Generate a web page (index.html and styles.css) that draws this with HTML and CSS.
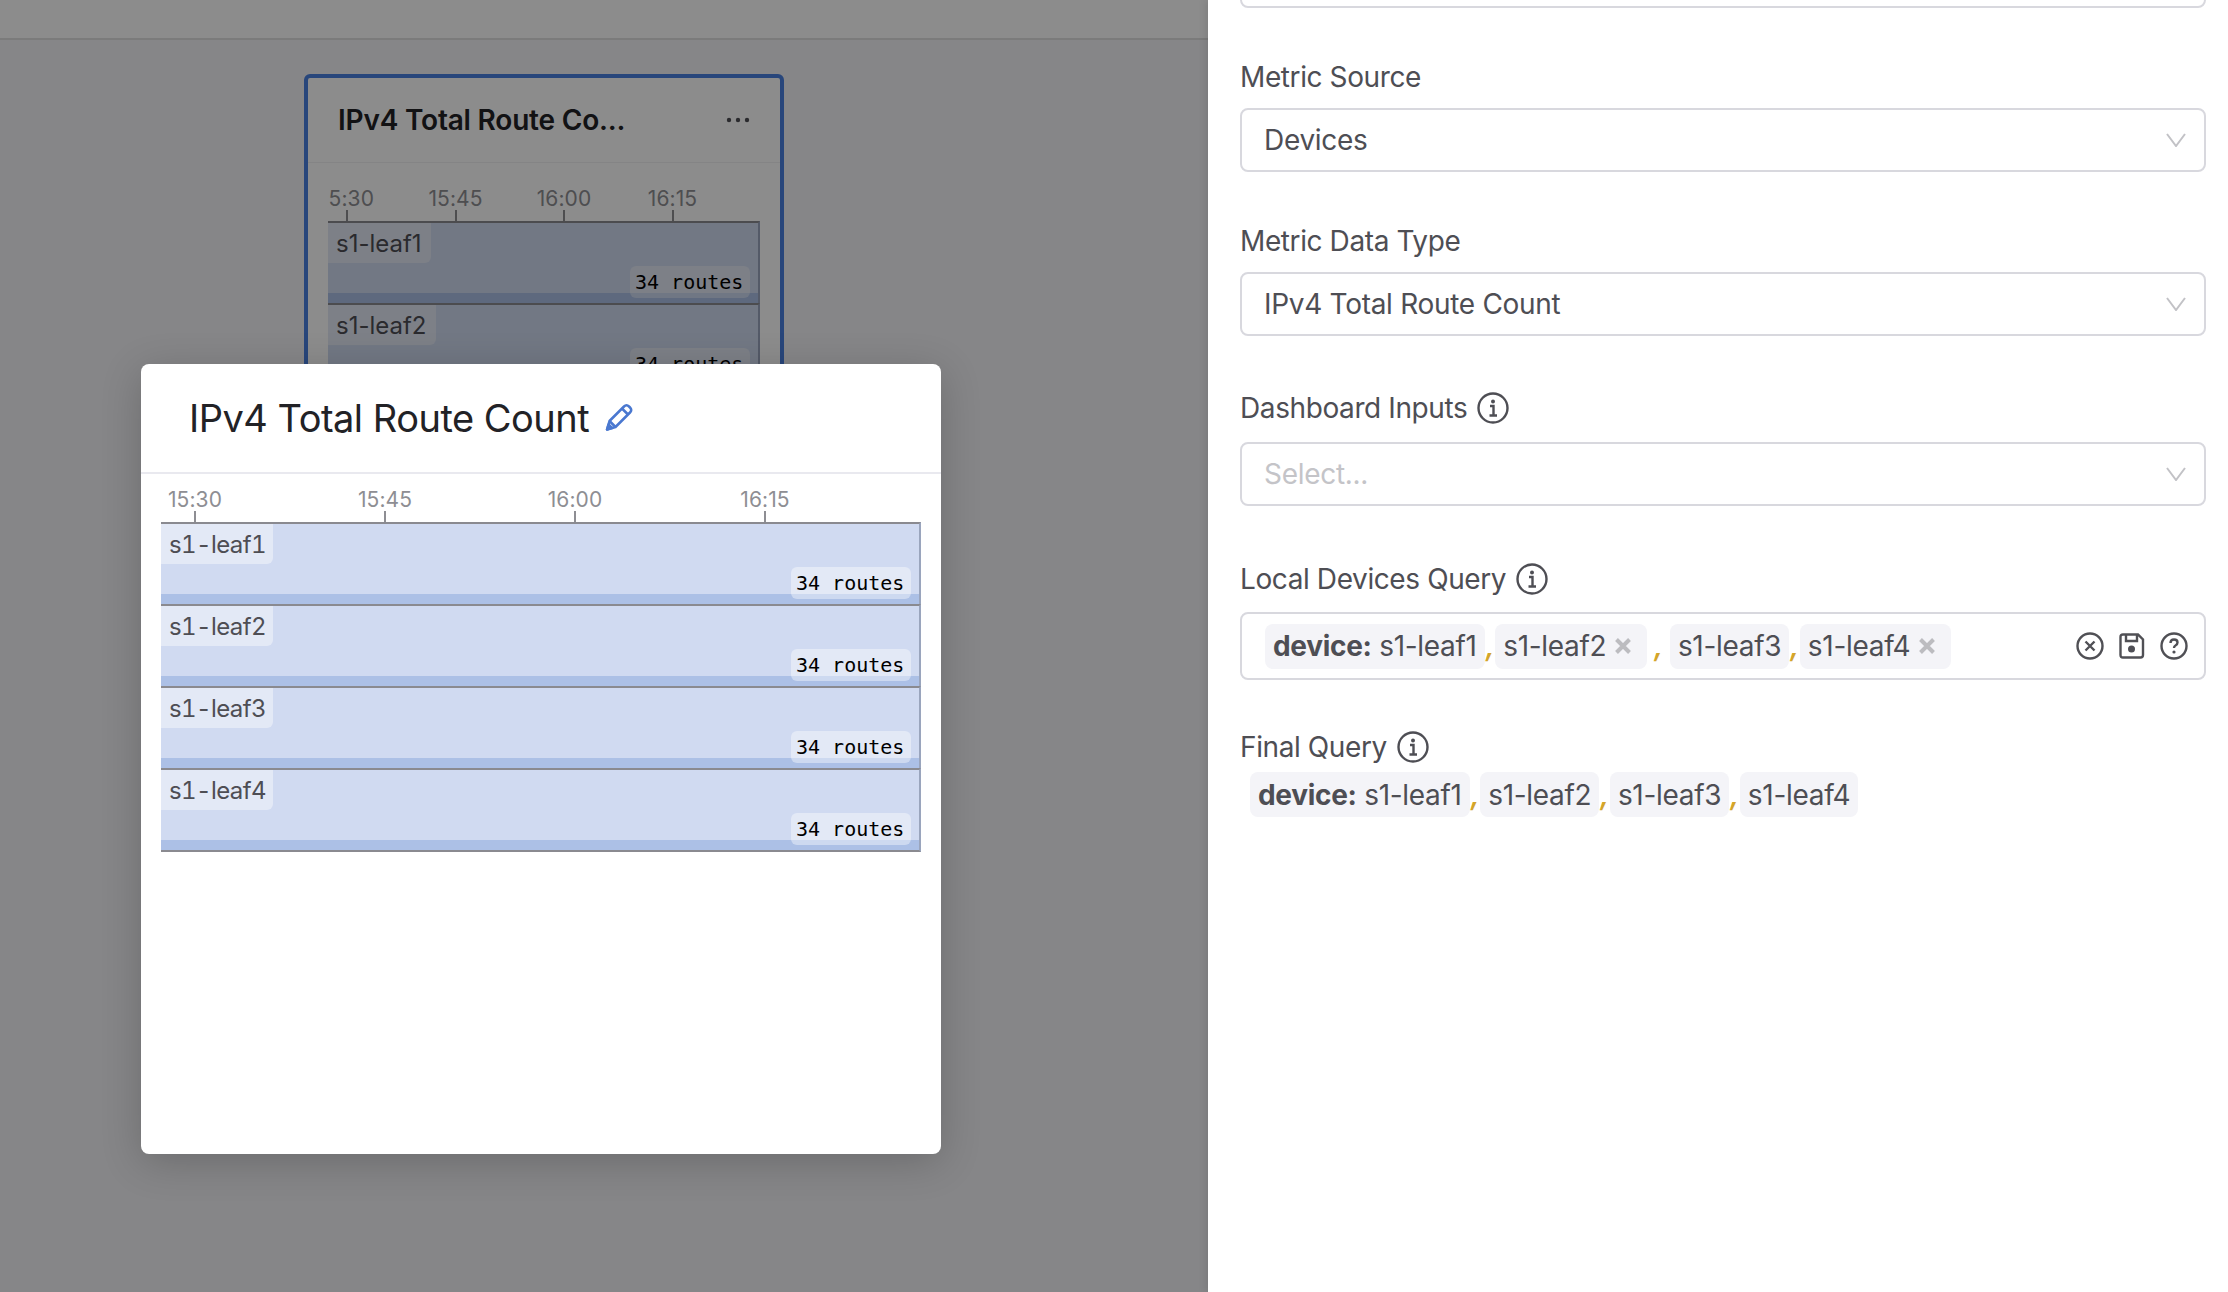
FILE: index.html
```html
<!DOCTYPE html>
<html>
<head>
	<meta charset="UTF-8">
	<title>IPv4 Total Route Count</title>
	<link rel="stylesheet" href="styles.css">
</head>
<body>
	<div class="page">
		<div class="canvas">
			<div class="topbar"></div>
			<div class="card">
				<div class="card-head">
					<span class="card-title">IPv4 Total Route Co...</span>
					<svg class="dots" viewBox="0 0 24 6" width="24" height="6"><circle cx="3" cy="3" r="2.2"/><circle cx="12" cy="3" r="2.2"/><circle cx="21" cy="3" r="2.2"/></svg>
				</div>
				<div class="timeline timeline-small">
					<div class="axis">
						<div class="tick">15:30</div>
						<div class="tick">15:45</div>
						<div class="tick">16:00</div>
						<div class="tick">16:15</div>
					</div>
					<div class="row"><span class="row-name">s1-leaf1</span><span class="row-value">34 routes</span></div>
					<div class="row"><span class="row-name">s1-leaf2</span><span class="row-value">34 routes</span></div>
					<div class="row"><span class="row-name">s1-leaf3</span><span class="row-value">34 routes</span></div>
				</div>
			</div>
			<div class="scrim"></div>
			<div class="modal">
				<div class="modal-head">
					<span class="modal-title">IPv4 Total Route Count</span>
					<svg class="pencil" viewBox="0 0 28 28" width="28" height="28">
						<path d="M2 26.500 L4.500 18 L19 3.500 Q21.500 1 24 3.500 L25 4.500 Q27.500 7 25 9.500 L10.500 24 Z"/>
						<path d="M17 5.500 L23 11.500 M4.500 18 L10.500 24"/>
						<path class="pencil-tip" d="M2 26.500 L3.500 21.500 L7 25 Z"/>
					</svg>
				</div>
				<div class="timeline timeline-large">
					<div class="axis">
						<div class="tick">15:30</div>
						<div class="tick">15:45</div>
						<div class="tick">16:00</div>
						<div class="tick">16:15</div>
					</div>
					<div class="row"><span class="row-name">s1-leaf1</span><span class="row-value">34 routes</span></div>
					<div class="row"><span class="row-name">s1-leaf2</span><span class="row-value">34 routes</span></div>
					<div class="row"><span class="row-name">s1-leaf3</span><span class="row-value">34 routes</span></div>
					<div class="row row-last"><span class="row-name">s1-leaf4</span><span class="row-value">34 routes</span></div>
				</div>
			</div>
		</div>

		<div class="drawer">
			<div class="select select-cut"></div>

			<div class="field">
				<div class="field-label">Metric Source</div>
				<div class="select">
					<span>Devices</span>
					<svg class="chevron" viewBox="0 0 20 14" width="20" height="14"><path d="M1 1 L10 13 L19 1"/></svg>
				</div>
			</div>

			<div class="field">
				<div class="field-label">Metric Data Type</div>
				<div class="select">
					<span>IPv4 Total Route Count</span>
					<svg class="chevron" viewBox="0 0 20 14" width="20" height="14"><path d="M1 1 L10 13 L19 1"/></svg>
				</div>
			</div>

			<div class="field field-inputs">
				<div class="field-label label-info">Dashboard Inputs
					<svg class="info" viewBox="0 0 32 32" width="32" height="32"><circle cx="16" cy="16" r="14.500"/><circle class="fill" cx="16" cy="9.500" r="2"/><path d="M13 14 H16.500 V23 M12.500 23.500 H20"/></svg>
				</div>
				<div class="select">
					<span class="placeholder">Select...</span>
					<svg class="chevron" viewBox="0 0 20 14" width="20" height="14"><path d="M1 1 L10 13 L19 1"/></svg>
				</div>
			</div>

			<div class="field field-query">
				<div class="field-label label-info">Local Devices Query
					<svg class="info" viewBox="0 0 32 32" width="32" height="32"><circle cx="16" cy="16" r="14.500"/><circle class="fill" cx="16" cy="9.500" r="2"/><path d="M13 14 H16.500 V23 M12.500 23.500 H20"/></svg>
				</div>
				<div class="query-input">
					<div class="chips">
						<span class="chip"><b>device:</b> s1-leaf1</span>
						<span class="comma">,</span>
						<span class="chip">s1-leaf2<svg class="chip-x" viewBox="0 0 16 16" width="16" height="16"><path d="M1.500 1.500 L14.500 14.500 M14.500 1.500 L1.500 14.500"/></svg></span>
						<span class="comma comma-wide">,</span>
						<span class="chip">s1-leaf3</span>
						<span class="comma">,</span>
						<span class="chip">s1-leaf4<svg class="chip-x" viewBox="0 0 16 16" width="16" height="16"><path d="M1.500 1.500 L14.500 14.500 M14.500 1.500 L1.500 14.500"/></svg></span>
					</div>
					<div class="query-tools">
						<svg viewBox="0 0 28 28" width="28" height="28"><circle cx="14" cy="14" r="12.500"/><path d="M9.500 9.500 L18.500 18.500 M18.500 9.500 L9.500 18.500"/></svg>
						<svg viewBox="0 0 28 28" width="28" height="28"><path d="M5 2.500 H20 L25 7.500 V23 Q25 25.500 22.500 25.500 H5 Q2.500 25.500 2.500 23 V5 Q2.500 2.500 5 2.500 Z M8 2.500 V9 H19 V2.500"/><circle class="fill" cx="13.500" cy="17" r="3.500"/></svg>
						<svg viewBox="0 0 28 28" width="28" height="28"><circle cx="14" cy="14" r="12.500"/><path d="M10.500 11 Q10.500 7.500 14 7.500 Q17.500 7.500 17.500 10.500 Q17.500 12.500 15.500 13.500 Q14 14.300 14 16"/><circle class="fill" cx="14" cy="20" r="1.600"/></svg>
					</div>
				</div>
			</div>

			<div class="field field-final">
				<div class="field-label label-info">Final Query
					<svg class="info" viewBox="0 0 32 32" width="32" height="32"><circle cx="16" cy="16" r="14.500"/><circle class="fill" cx="16" cy="9.500" r="2"/><path d="M13 14 H16.500 V23 M12.500 23.500 H20"/></svg>
				</div>
				<div class="chips chips-final">
					<span class="chip"><b>device:</b> s1-leaf1</span>
					<span class="comma">,</span>
					<span class="chip">s1-leaf2</span>
					<span class="comma">,</span>
					<span class="chip">s1-leaf3</span>
					<span class="comma">,</span>
					<span class="chip">s1-leaf4</span>
				</div>
			</div>
		</div>
	</div>
</body>
</html>
```

FILE: styles.css
```css
body {
	margin: 0;
	font-family: Inter, "Noto Sans", sans-serif;
	color: #4e4e54;
}
.page {
	display: flex;
	width: 2228px;
	height: 1292px;
	overflow: hidden;
}

/* left side, dimmed dashboard */
.canvas {
	position: relative;
	width: 1208px;
	flex-shrink: 0;
	background-color: #f4f4f7;
}
.topbar {
	height: 38px;
	background-color: #fff;
	border-bottom: 2px solid #e0e0e0;
}
.card {
	box-sizing: border-box;
	width: 480px;
	height: 520px;
	margin: 34px 0 0 304px;
	background-color: #fff;
	border: 4px solid #4a80e0;
	border-radius: 6px;
	overflow: hidden;
}
.card-head {
	display: flex;
	align-items: center;
	justify-content: space-between;
	height: 84px;
	padding: 0 30px 0 30px;
	border-bottom: 1px solid #f0f0f3;
}
.card-title {
	font-size: 28px;
	font-weight: 600;
	letter-spacing: -0.2px;
	color: #222226;
}
.dots {
	fill: #4e4e54;
}
.scrim {
	position: absolute;
	top: 0;
	left: 0;
	right: 0;
	bottom: 0;
	background-color: rgba(0,0,0,0.45);
}

/* timeline rows */
.timeline {
	overflow: hidden;
}
.timeline-small {
	width: 432px;
	margin: 23px 0 0 20px;
}
.timeline-large {
	width: 760px;
	margin: 13px 0 0 20px;
}
.axis {
	display: flex;
	height: 35px;
	font-size: 21px;
	letter-spacing: 0.1px;
	color: #8e8e93;
}
.timeline-small .axis {
	gap: 48.500px;
	margin-left: -11px;
}
.timeline-large .axis {
	gap: 130px;
	padding-left: 4px;
}
.tick {
	position: relative;
	width: 60px;
	flex-shrink: 0;
	line-height: 26px;
	text-align: center;
}
.tick::after {
	content: "";
	position: absolute;
	left: 29px;
	bottom: 0;
	width: 2px;
	height: 11px;
	background-color: #8e8e93;
}
.row {
	display: flex;
	flex-direction: column;
	box-sizing: border-box;
	height: 82px;
	border-top: 2px solid #8a8a90;
	border-right: 2px solid #9aa5bd;
	background: linear-gradient(#d0daf1 0 70px, #acc0e6 70px);
}
.row-last {
	height: 84px;
	border-bottom: 2px solid #8a8a90;
}
.row-name {
	align-self: flex-start;
	height: 40px;
	padding: 0 9px 0 8px;
	font-size: 24px;
	line-height: 41px;
	white-space: nowrap;
	color: #4e4e54;
	background-color: rgba(255,255,255,0.4);
	border-radius: 0 0 6px 0;
}
.timeline-large .row-name {
	box-sizing: border-box;
	width: 112px;
	font-variant-numeric: tabular-nums;
	letter-spacing: -0.6px;
}
.row-value {
	align-self: flex-end;
	box-sizing: border-box;
	width: 120px;
	height: 32px;
	margin: 3px 8px 0 0;
	padding-left: 5px;
	font-family: "DejaVu Sans Mono", "Liberation Mono", monospace;
	font-size: 20px;
	line-height: 32px;
	color: #000;
	background-color: rgba(255,255,255,0.4);
	border-radius: 6px;
	white-space: nowrap;
}

/* modal over the scrim */
.modal {
	position: absolute;
	top: 364px;
	left: 141px;
	width: 800px;
	height: 790px;
	background-color: #fff;
	border-radius: 8px;
	box-shadow: 0 8px 40px rgba(0,0,0,0.2);
}
.modal-head {
	display: flex;
	align-items: center;
	gap: 16px;
	box-sizing: border-box;
	height: 110px;
	padding-left: 48px;
	border-bottom: 2px solid #e9e9ef;
}
.modal-title {
	font-size: 38px;
	letter-spacing: -0.5px;
	color: #222226;
}
.pencil {
	fill: none;
	stroke: #4a78d0;
	stroke-width: 2.500;
	stroke-linejoin: round;
	margin-top: -2px;
}
.pencil-tip {
	fill: #4a78d0;
}

/* right drawer */
.drawer {
	position: relative;
	flex: 1;
	box-sizing: border-box;
	padding: 0 22px 0 32px;
	font-size: 28px;
	letter-spacing: -0.3px;
	background-color: #fff;
	box-shadow: -2px 0 8px rgba(0,0,0,0.1);
}
.select {
	display: flex;
	align-items: center;
	justify-content: space-between;
	box-sizing: border-box;
	height: 64px;
	padding: 0 18px 0 22px;
	border: 2px solid #d8d8de;
	border-radius: 8px;
}
.select-cut {
	margin-top: -56px;
}
.field {
	margin-top: 52px;
}
.field-label {
	height: 34px;
	margin-bottom: 14px;
	line-height: 34px;
	letter-spacing: -0.4px;
}
.label-info {
	display: flex;
	align-items: center;
	gap: 10px;
	height: 36px;
	margin-bottom: 16px;
}
.chevron {
	fill: none;
	stroke: #c2c2c6;
	stroke-width: 2;
}
.placeholder {
	color: #c4c4c8;
}
.info {
	fill: none;
	stroke: #4e4e54;
	stroke-width: 2.400;
}
.info .fill,
.query-tools .fill {
	fill: #4e4e54;
	stroke: none;
}
.field-inputs {
	margin-top: 54px;
}
.field-query {
	margin-top: 55px;
}
.field-query .field-label {
	margin-bottom: 15px;
}
.query-input {
	display: flex;
	align-items: center;
	justify-content: space-between;
	box-sizing: border-box;
	height: 68px;
	padding: 0 16px 0 23px;
	border: 2px solid #d8d8de;
	border-radius: 8px;
}
.chips {
	display: flex;
	align-items: center;
}
.field-final {
	margin-top: 49px;
}
.field-final .field-label {
	margin-bottom: 7px;
}
.chips-final {
	padding-left: 10px;
}
.chip {
	display: flex;
	align-items: center;
	height: 45px;
	padding: 0 8px;
	white-space: pre;
	background-color: #f4f4f8;
	border-radius: 8px;
}
.chip b {
	font-weight: 700;
}
.chip-x {
	margin: 0 8px 0 9px;
	fill: none;
	stroke: #bcbcc0;
	stroke-width: 4;
}
.comma {
	width: 10.500px;
	font-weight: 600;
	font-style: italic;
	text-align: center;
	color: #d4a52a;
}
.comma-wide {
	width: 22.500px;
}
.query-tools {
	display: flex;
	gap: 14px;
}
.query-tools svg {
	fill: none;
	stroke: #505055;
	stroke-width: 2.400;
}
```
